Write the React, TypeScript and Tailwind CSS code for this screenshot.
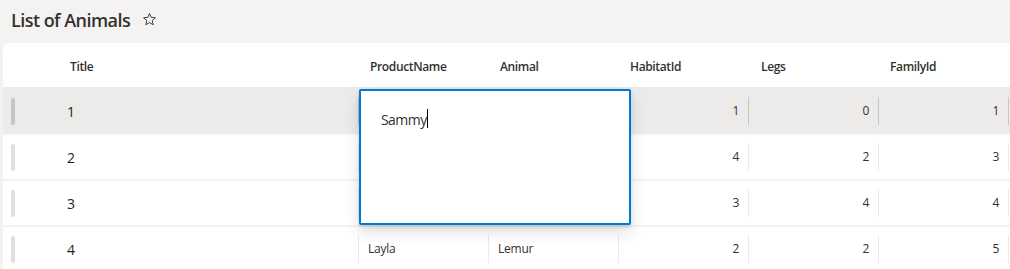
import React from "react";

const FONT = { fontFamily: '"Segoe UI", "Open Sans", "Noto Sans", sans-serif' };

type Row = { title: string; product: string; animal: string; habitat: string; legs: string; family: string };

const rows: Row[] = [
  { title: "1", product: "", animal: "", habitat: "1", legs: "0", family: "1" },
  { title: "2", product: "", animal: "", habitat: "4", legs: "2", family: "3" },
  { title: "3", product: "", animal: "", habitat: "3", legs: "4", family: "4" },
  { title: "4", product: "Layla", animal: "Lemur", habitat: "2", legs: "2", family: "5" },
];

function Star() {
  return (
    <svg width="15" height="15" viewBox="0 0 16 16" fill="none">
      <path
        d="M8 1.6l1.85 4.1 4.45.45-3.35 3 .95 4.4L8 11.3l-3.9 2.25.95-4.4-3.35-3 4.45-.45z"
        stroke="#323130"
        strokeWidth="1"
        strokeLinejoin="round"
      />
    </svg>
  );
}

export default function App() {
  return (
    <div className="w-[1010px] h-[269px] overflow-hidden bg-[#f4f3f2] text-[#323130]" style={FONT}>
      <div className="h-[43px] flex items-center pl-[11px] pb-[4px]">
        <span className="text-[18px] font-semibold leading-none tracking-[-0.03em]">List of Animals</span>
        <span className="ml-[12px] flex items-center">
          <Star />
        </span>
      </div>
      <div className="ml-[3px] bg-white rounded-tl-[6px] relative h-[226px]">
        <div className="h-[44px] pt-[3px] flex items-center text-[12px] font-semibold tracking-[-0.03em]">
          <div className="w-[355px] pl-[67px]">Title</div>
          <div className="w-[130px] pl-[12px]">ProductName</div>
          <div className="w-[130px] pl-[12px]">Animal</div>
          <div className="w-[130px] pl-[12px]">HabitatId</div>
          <div className="w-[130px] pl-[13px]">Legs</div>
          <div className="w-[130px] pl-[12px]">FamilyId</div>
        </div>
        {rows.map((r, i) => {
          const sel = i === 0;
          const div = sel ? "bg-[#c8c6c4]" : "bg-[#edebe9]";
          const cells = [r.product, r.animal, r.habitat, r.legs, r.family];
          return (
            <div
              key={r.title}
              className={`h-[46px] flex items-center border-t-2 ${
                sel ? "bg-[#edebe9] border-[#edebe9]" : "bg-white border-[#f3f2f1]"
              }`}
            >
              <div className="w-[355px] flex items-center pl-[8px]">
                <div className={`w-[4px] h-[27px] rounded-full ${sel ? "bg-[#c8c6c4]" : "bg-[#e1dfdd]"}`} />
                <span className="ml-[52px] text-[14px] font-medium text-[#201f1e]">{r.title}</span>
              </div>
              {cells.map((c, j) => (
                <div key={j} className="w-[130px] flex items-center">
                  <div className={`w-px h-[28px] ${div}`} />
                  <div
                    className={`flex-1 text-[12px] tracking-[-0.02em] ${j < 2 ? "pl-[9px] text-left" : "pr-[9px] text-right"}`}
                  >
                    {c}
                  </div>
                </div>
              ))}
              <div className={`w-px h-[28px] ${div}`} />
            </div>
          );
        })}
        <div className="absolute left-[356px] top-[46px] w-[272px] h-[136px] bg-white border-2 border-[#0078d4] rounded-[2px] shadow-[0_6.4px_14.4px_rgba(0,0,0,0.13),0_1.2px_3.6px_rgba(0,0,0,0.11)]">
          <div className="pl-[20px] pt-[15px] flex items-center text-[14px] h-[40px] tracking-[-0.04em]">
            <span className="relative top-[1px]">Sammy</span>
            <span className="inline-block w-px h-[19px] bg-black" />
          </div>
        </div>
      </div>
    </div>
  );
}
